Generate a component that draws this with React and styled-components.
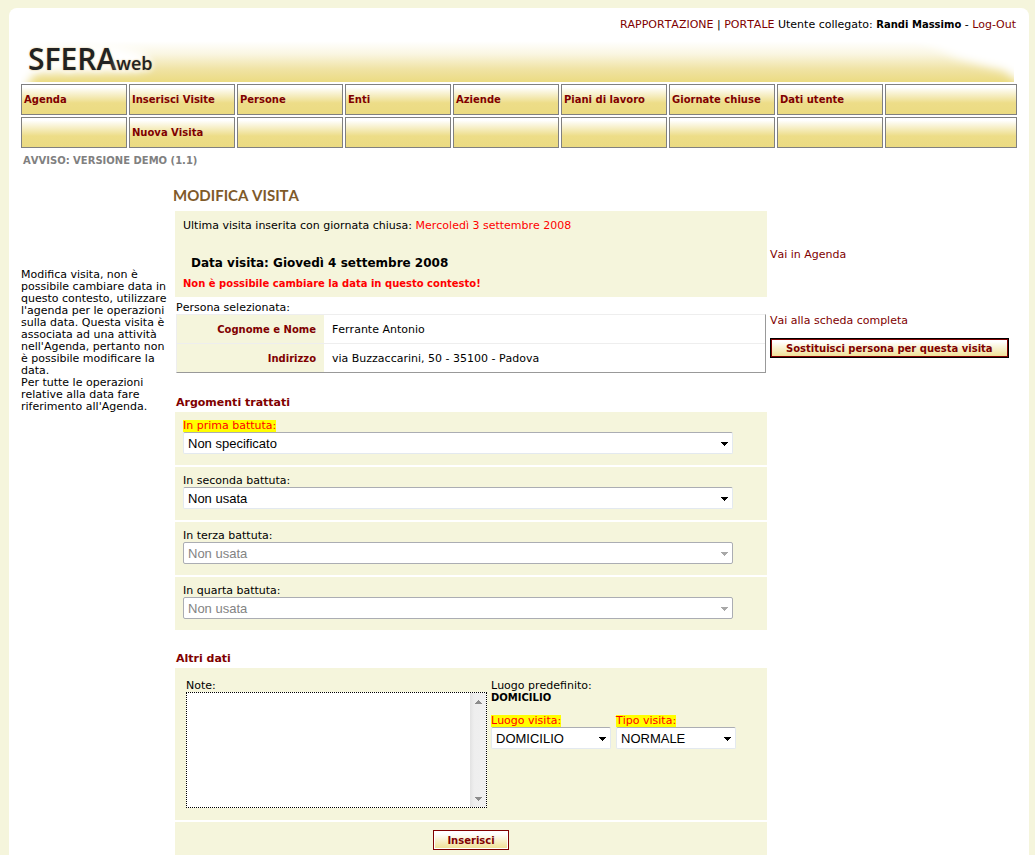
import React from "react";
import styled, { createGlobalStyle } from "styled-components";

const GlobalStyle = createGlobalStyle`
  * {
    box-sizing: border-box;
  }
  body {
    margin: 0;
    background: #f5f5dc;
    color: #000;
    font-family: "DejaVu Sans", Verdana, sans-serif;
    font-size: 11px;
    font-kerning: none;
    line-height: 12px;
  }
  a {
    color: #800000;
    text-decoration: none;
  }
  b, strong {
    font-size: 10px;
  }
`;

const Page = styled.div`
  min-height: 100vh;
  padding: 8px 6px 0 9px;
  display: flex;
`;

const Sheet = styled.div`
  flex: 1;
  padding: 11px 12px 5px;
  background: #fff;
  border-radius: 8px 8px 0 0;
`;

const UserBar = styled.div`
  text-align: right;
  padding-right: 1px;
`;

const Banner = styled.header`
  position: relative;
  height: 51px;
  margin-right: 3px;
`;

const BannerArt = styled.svg`
  position: absolute;
  inset: 0;
  width: 100%;
  height: 100%;
`;

const Logo = styled.div`
  position: relative;
  padding: 10px 0 0 7px;
  font-family: "Open Sans", "Noto Sans", sans-serif;
  font-size: 30px;
  font-weight: 600;
  line-height: 36px;
  color: #222;
  text-shadow: 0 0 2px #d8b878, 0 0 5px #fff, 0 0 8px #fff;

  small {
    font-size: 18px;
  }
`;

const Menu = styled.nav`
  display: grid;
  grid-template-columns: repeat(8, 53fr) 66fr;
  gap: 2px;
  margin-top: 2px;
`;

const MenuCell = styled.div`
  display: flex;
  align-items: center;
  height: 31px;
  padding: 0 2px;
  border: 1px solid #808080;
  background: linear-gradient(#fff 8%, #eddd88 62%, #ebdb82);
  font-size: 10px;
  font-weight: bold;
  white-space: nowrap;
`;

const Notice = styled.p`
  margin: 7px 2px 18px;
  font-size: 10px;
  font-weight: bold;
  color: #808080;
`;

const Columns = styled.div`
  display: grid;
  grid-template-columns: 152px minmax(0, 1fr);
`;

const Help = styled.aside`
  padding-top: 84px;
`;

const Title = styled.h1`
  margin: 0 0 6px;
  font-family: "Trebuchet MS", Lato, sans-serif;
  font-size: 15px;
  font-weight: bold;
  line-height: 20px;
  color: #7f5a2a;
`;

const Row = styled.div`
  display: grid;
  grid-template-columns: minmax(0, 592fr) minmax(0, 247fr);
  column-gap: 3px;
  padding-left: 2px;
  align-items: ${(props) => (props.$middle ? "center" : "start")};
`;

const Panel = styled.div`
  padding: ${(props) => props.$pad || "8px"};
  margin-bottom: ${(props) => (props.$stacked ? "2px" : "0")};
  background: #f5f5dc;
`;

const DateHeading = styled.h2`
  margin: 23px 8px 7px;
  font-size: 12px;
  line-height: 16px;
`;

const Red = styled.span`
  color: #f00;
`;

const Person = styled.div`
  padding: 5px 1px 1px;
`;

const PersonTable = styled.table`
  width: 100%;
  border: 1px solid #eee;
  border-right-color: #999;
  border-bottom-color: #999;
  border-spacing: 0;

  caption {
    text-align: left;
  }
  th,
  td {
    height: 28px;
    padding: 2px 8px 0;
  }
  th {
    width: 147px;
    background: #f5f5dc;
    color: #800000;
    font-size: 10px;
    text-align: right;
  }
  tr + tr th,
  tr + tr td {
    height: 29px;
    border-top: 1px solid #eee;
  }
`;

const SideLinks = styled.div`
  display: flex;
  flex-direction: column;
  align-items: flex-start;
  gap: 11px;
  padding-top: ${(props) => (props.$lower ? "18px" : "2px")};
`;

const Button = styled.button`
  height: 20px;
  padding: 1px ${(props) => (props.$focused ? "15px" : "13px")} 0;
  border: 1px solid ${(props) => (props.$focused ? "#000" : "#800000")};
  box-shadow: inset 0 0 0 1px ${(props) => (props.$focused ? "#800000" : "#fff")};
  background: linear-gradient(#fff 15%, #efdf90);
  color: #800000;
  font-family: inherit;
  font-size: 10px;
  font-weight: bold;
  line-height: 16px;
  white-space: nowrap;
`;

const SectionTitle = styled.h2`
  margin: 21px 1px 1px;
  font-size: 11px;
  line-height: 16px;
  color: #800000;
`;

const Label = styled.label`
  display: table;
  background: ${(props) => (props.$required ? "#ff0" : "none")};
  color: ${(props) => (props.$required ? "#f00" : "#000")};
`;

const SelectBox = styled.div`
  position: relative;

  select {
    display: block;
    appearance: none;
    width: 100%;
    height: 22px;
    padding: 0 20px 0 4px;
    border: 1px solid #e3e9ef;
    border-top-color: #abadb3;
    border-radius: 2px;
    background: #fff;
    color: #000;
    font-family: "Liberation Sans", Arial, sans-serif;
    font-size: 13px;
    opacity: 1;
  }
  select:disabled {
    border-color: #abadb3;
    color: #838383;
  }
  svg {
    position: absolute;
    top: 10px;
    right: 5px;
    pointer-events: none;
  }
`;

const Details = styled.div`
  display: grid;
  grid-template-columns: 301px minmax(0, 250px);
  gap: 4px;
`;

const NoteBox = styled.div`
  display: flex;
  height: 116px;
  border: 1px dotted #000;
  background: #fff;

  textarea {
    flex: 1;
    min-width: 0;
    padding: 2px;
    border: 0;
    outline: 0;
    resize: none;
    overflow: hidden;
    font-family: "Liberation Sans", Arial, sans-serif;
    font-size: 13px;
  }
`;

const ScrollTrack = styled.div`
  display: flex;
  flex-direction: column;
  justify-content: space-between;
  align-items: center;
  width: 16px;
  padding: 7px 0 6px;
  background: linear-gradient(90deg, #e2e2e2, #eee 25%, #f0f0f0);
`;

const VisitFields = styled.div`
  display: grid;
  grid-template-columns: 1fr 1fr;
  gap: 5px;
  width: 245px;
  margin-top: 11px;
`;

const Actions = styled(Panel)`
  display: flex;
  justify-content: center;
`;

const menu = [
  "Agenda",
  "Inserisci Visite",
  "Persone",
  "Enti",
  "Aziende",
  "Piani di lavoro",
  "Giornate chiuse",
  "Dati utente",
  "",
];
const submenu = ["", "Nuova Visita", "", "", "", "", "", "", ""];

const topics = [
  { id: "prima", label: "In prima battuta:", value: "Non specificato", required: true },
  { id: "seconda", label: "In seconda battuta:", value: "Non usata" },
  { id: "terza", label: "In terza battuta:", value: "Non usata", disabled: true },
  { id: "quarta", label: "In quarta battuta:", value: "Non usata", disabled: true },
];

function Arrow({ up, color }) {
  return (
    <svg width="7" height="4" viewBox="0 0 7 4" shapeRendering="crispEdges">
      <path
        d={up ? "M3 0h1v1h1v1h1v1h1v1H0V3h1V2h1V1h1z" : "M0 0h7v1H6v1H5v1H4v1H3V3H2V2H1V1H0z"}
        fill={color}
      />
    </svg>
  );
}

function Field({ id, label, value, required, disabled }) {
  return (
    <div>
      <Label htmlFor={id} $required={required}>
        {label}
      </Label>
      <SelectBox>
        <select id={id} disabled={disabled}>
          <option>{value}</option>
        </select>
        <Arrow color={disabled ? "#a8a8a8" : "#000"} />
      </SelectBox>
    </div>
  );
}

function App() {
  return (
    <Page>
      <GlobalStyle />
      <Sheet>
        <UserBar>
          <a href="#rapportazione">RAPPORTAZIONE</a> | <a href="#portale">PORTALE</a> Utente
          collegato: <b>Randi Massimo</b> - <a href="#logout">Log-Out</a>
        </UserBar>

        <Banner>
          <BannerArt viewBox="0 0 993 51" preserveAspectRatio="none" aria-hidden="true">
            <defs>
              <linearGradient id="gold" x1="0" y1="0" x2="0" y2="1">
                <stop offset="0.2" stopColor="#fff" />
                <stop offset="0.45" stopColor="#faf6e2" />
                <stop offset="0.75" stopColor="#f0e3a4" />
                <stop offset="1" stopColor="#ebdb82" />
              </linearGradient>
              <filter id="soft" x="-20%" y="-50%" width="140%" height="200%">
                <feGaussianBlur stdDeviation="5" />
              </filter>
            </defs>
            <rect width="993" height="51" fill="url(#gold)" />
            <path
              d="M840 -20 Q905 10 935 26 Q960 34 982 39 L1003 54 V-20Z"
              fill="#fff"
              filter="url(#soft)"
            />
            <path
              d="M-20 -10H10L24 14H94L124 22Q130 36 118 40L14 42L2 62H-20Z"
              fill="#fff"
              filter="url(#soft)"
            />
          </BannerArt>
          <Logo>
            SFERA<small>web</small>
          </Logo>
        </Banner>

        <Menu>
          {[...menu, ...submenu].map((item, i) => (
            <MenuCell key={i}>{item && <a href="#menu">{item}</a>}</MenuCell>
          ))}
        </Menu>
        <Notice>AVVISO: VERSIONE DEMO (1.1)</Notice>

        <Columns>
          <Help>
            Modifica visita, non è possibile cambiare data in questo contesto, utilizzare
            l'agenda per le operazioni sulla data. Questa visita è associata ad una attività
            nell'Agenda, pertanto non è possibile modificare la data.
            <br />
            Per tutte le operazioni relative alla data fare riferimento all'Agenda.
          </Help>

          <main>
            <Title>MODIFICA VISITA</Title>
            <Row $middle>
              <Panel $pad="9px 8px 7px">
                <div>
                  Ultima visita inserita con giornata chiusa: <Red>Mercoledì 3 settembre 2008</Red>
                </div>
                <DateHeading>Data visita: Giovedì 4 settembre 2008</DateHeading>
                <Red as="strong">Non è possibile cambiare la data in questo contesto!</Red>
              </Panel>
              <SideLinks>
                <a href="#agenda">Vai in Agenda</a>
              </SideLinks>
            </Row>

            <Row>
              <Person>
                <PersonTable>
                  <caption>Persona selezionata:</caption>
                  <tbody>
                    <tr>
                      <th scope="row">Cognome e Nome</th>
                      <td>Ferrante Antonio</td>
                    </tr>
                    <tr>
                      <th scope="row">Indirizzo</th>
                      <td>via Buzzaccarini, 50 - 35100 - Padova</td>
                    </tr>
                  </tbody>
                </PersonTable>
              </Person>
              <SideLinks $lower>
                <a href="#scheda">Vai alla scheda completa</a>
                <Button type="button" $focused>
                  Sostituisci persona per questa visita
                </Button>
              </SideLinks>
            </Row>

            <Row>
              <form>
                <SectionTitle>Argomenti trattati</SectionTitle>
                {topics.map((topic, i) => (
                  <Panel key={topic.id} $pad="8px 34px 11px 8px" $stacked={i < topics.length - 1}>
                    <Field {...topic} />
                  </Panel>
                ))}

                <SectionTitle>Altri dati</SectionTitle>
                <Panel $pad="12px 11px" $stacked>
                  <Details>
                    <div>
                      <Label htmlFor="note">Note:</Label>
                      <NoteBox>
                        <textarea id="note" />
                        <ScrollTrack>
                          <Arrow up color="#8c8c8c" />
                          <Arrow color="#8c8c8c" />
                        </ScrollTrack>
                      </NoteBox>
                    </div>
                    <div>
                      <div>Luogo predefinito:</div>
                      <div>
                        <b>DOMICILIO</b>
                      </div>
                      <VisitFields>
                        <Field id="luogo" label="Luogo visita:" value="DOMICILIO" required />
                        <Field id="tipo" label="Tipo visita:" value="NORMALE" required />
                      </VisitFields>
                    </div>
                  </Details>
                </Panel>
                <Actions>
                  <Button type="button">Inserisci</Button>
                </Actions>
              </form>
            </Row>
          </main>
        </Columns>
      </Sheet>
    </Page>
  );
}

export default App;
